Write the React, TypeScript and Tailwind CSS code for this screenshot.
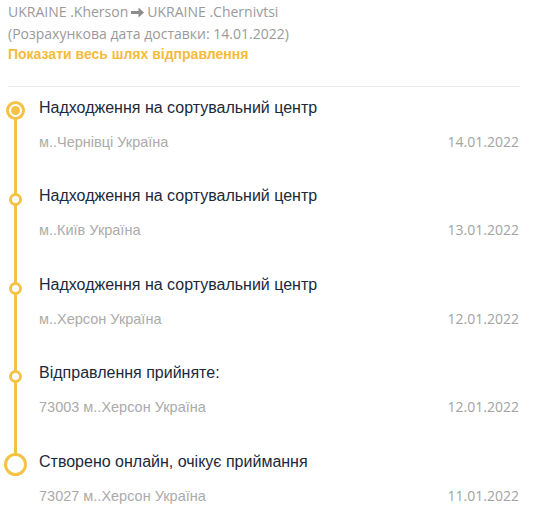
import React from 'react';

type Step = {
    title: string;
    place: string;
    date: string;
    kind: 'current' | 'dot' | 'start';
};

const steps: Step[] = [
    { title: 'Надходження на сортувальний центр', place: 'м..Чернівці Україна', date: '14.01.2022', kind: 'current' },
    { title: 'Надходження на сортувальний центр', place: 'м..Київ Україна', date: '13.01.2022', kind: 'dot' },
    { title: 'Надходження на сортувальний центр', place: 'м..Херсон Україна', date: '12.01.2022', kind: 'dot' },
    { title: 'Відправлення прийняте:', place: '73003 м..Херсон Україна', date: '12.01.2022', kind: 'dot' },
    { title: 'Створено онлайн, очікує приймання', place: '73027 м..Херсон Україна', date: '11.01.2022', kind: 'start' },
];

function Marker({ kind }: { kind: Step['kind'] }) {
    if (kind === 'current') {
        return (
            <div className="mt-[-9px] w-[19px] h-[19px] shrink-0 rounded-full border-[3px] border-[#f4c246] bg-white flex items-center justify-center">
                <div className="w-[9px] h-[9px] rounded-full bg-[#f4c246]" />
            </div>
        );
    }
    if (kind === 'start') {
        return <div className="mt-[-11px] w-[23px] h-[23px] shrink-0 rounded-full border-[3px] border-[#f4c246] bg-white" />;
    }
    return <div className="mt-[-5px] w-[13px] h-[13px] shrink-0 rounded-full border-[3px] border-[#f4c246] bg-white" />;
}

function Arrow() {
    return (
        <svg width="13" height="11" viewBox="0 0 13 11" className="inline-block mx-[3px] align-[-1px]">
            <path d="M0 4h7.5V0.5L13 5.5 7.5 10.5V7H0z" fill="#8c8c8c" />
        </svg>
    );
}

export default function App() {
    return (
        <div className="w-[540px] h-[517px] bg-white overflow-hidden pl-2 pr-[21px]" style={{ fontFamily: '"Open Sans", sans-serif' }}>
            {/* Header */}
            <div className="pt-[1px] text-[14px] leading-[21.5px] text-[#9a9a9a]">
                <div>UKRAINE .Kherson<Arrow />UKRAINE .Chernivtsi</div>
                <div>(Розрахункова дата доставки: 14.01.2022)</div>
                <div className="text-[14px] font-bold text-[#f5bb3a]" style={{ fontFamily: '"Liberation Sans", Arial, sans-serif' }}>
                    Показати весь шлях відправлення
                </div>
            </div>

            <div className="mt-[20px] mr-[-1px] border-t border-[#ececec]" />

            {/* Timeline */}
            <div className="relative mt-[11px]" style={{ fontFamily: '"Liberation Sans", Arial, sans-serif' }}>
                <div className="absolute left-[6px] top-[14px] h-[352px] w-[3px] bg-[#f4c246]" />
                {steps.map((s, i) => (
                    <div key={i} className="relative flex h-[88.5px]">
                        <div className="w-[15px] shrink-0 flex justify-center pt-[12px]">
                            <div className="h-0 w-0 flex justify-center">
                                <Marker kind={s.kind} />
                            </div>
                        </div>
                        <div className="flex-1 ml-[16px]">
                            <div className="text-[16px] leading-[20px] text-[#1b293a]">{s.title}</div>
                            <div className="mt-[14px] flex justify-between text-[14.5px] leading-[20px]">
                                <span className="text-[#ababab]">{s.place}</span>
                                <span className="text-[14px] text-[#a3a3a3]" style={{ fontFamily: '"Open Sans", sans-serif' }}>{s.date}</span>
                            </div>
                        </div>
                    </div>
                ))}
            </div>
        </div>
    );
}
